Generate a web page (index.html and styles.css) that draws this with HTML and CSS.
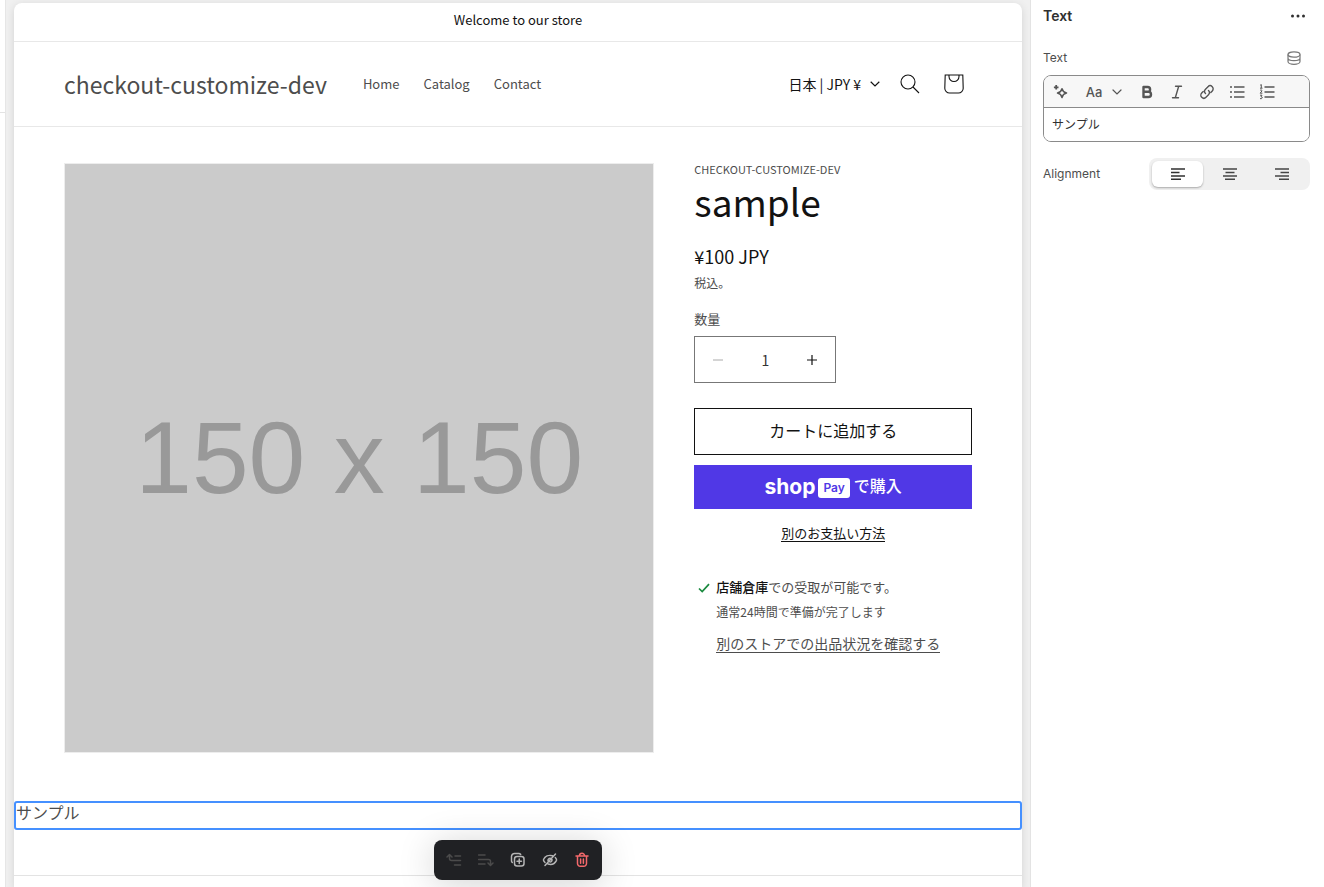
FILE: index.html
```html
<!DOCTYPE html>
<html lang="ja">
<head>
<meta charset="utf-8">
<meta name="viewport" content="width=device-width, initial-scale=1">
<title>checkout-customize-dev</title>
<link rel="stylesheet" href="styles.css">
</head>
<body>
<div class="editor">
  <aside class="sidebar-edge"><div class="sidebar-head"></div></aside>

  <div class="canvas">
    <div class="store">
      <p class="announcement">Welcome to our store</p>

      <header class="header">
        <a class="brand" href="#">checkout-customize-dev</a>
        <nav class="nav">
          <a href="#">Home</a>
          <a href="#">Catalog</a>
          <a href="#">Contact</a>
        </nav>
        <div class="header-tools">
          <button class="locale" type="button">日本 | JPY ¥
            <svg width="10" height="6" viewBox="0 0 10 6" fill="none" stroke="currentColor" stroke-width="1.2"><path d="M.7 .8 5 5 9.3 .8"/></svg>
          </button>
          <button class="tool" type="button" aria-label="Search">
            <svg width="20" height="20" viewBox="0 0 20 20" fill="none" stroke="currentColor" stroke-width="1.1"><circle cx="8" cy="8" r="7"/><path d="M13 13l6 6"/></svg>
          </button>
          <button class="tool" type="button" aria-label="Cart">
            <svg width="20" height="20" viewBox="0 0 20 20" fill="none" stroke="currentColor" stroke-width="1.1"><path d="M1.2 1h17.6l.4 13.2a4.800 4.800 0 0 1-4.800 4.800H5.600a4.800 4.800 0 0 1-4.800-4.800z"/><path d="M5 1v1.500a5 5 0 0 0 10 0V1"/></svg>
          </button>
        </div>
      </header>

      <main>
        <section class="product">
          <div class="media">
            <svg viewBox="0 0 150 150" role="img" aria-label="150 x 150"><rect width="150" height="150" fill="#cbcbcb"/><text class="media-label" x="75" y="84" text-anchor="middle">150 x 150</text></svg>
          </div>
          <div class="info">
            <p class="vendor">CHECKOUT-CUSTOMIZE-DEV</p>
            <h1 class="title">sample</h1>
            <p class="price">¥100 JPY</p>
            <p class="tax">税込。</p>
            <label class="qty-label" for="qty">数量</label>
            <div class="qty">
              <button type="button" aria-label="Decrease" disabled><svg width="10" height="10" viewBox="0 0 10 10" stroke="currentColor"><path d="M0 5h10"/></svg></button>
              <input id="qty" type="text" inputmode="numeric" value="1">
              <button type="button" aria-label="Increase"><svg width="10" height="10" viewBox="0 0 10 10" stroke="currentColor" stroke-width="1.2"><path d="M0 5h10M5 0v10"/></svg></button>
            </div>
            <button class="add" type="button">カートに追加する</button>
            <button class="shop-pay" type="button"><span class="shop">shop</span><span class="pay">Pay</span><span class="buy">で購入</span></button>
            <a class="more-pay" href="#">別のお支払い方法</a>
            <div class="pickup">
              <svg class="tick" width="12" height="10" viewBox="0 0 12 10" fill="none" stroke="#1a8a3f" stroke-width="1.700"><path d="M1 5.500 4.200 8.600 11 1.200"/></svg>
              <div class="pickup-body">
                <p class="pickup-place"><strong>店舗倉庫</strong>での受取が可能です。</p>
                <p class="pickup-time">通常24時間で準備が完了します</p>
                <button class="pickup-link" type="button">別のストアでの出品状況を確認する</button>
              </div>
            </div>
          </div>
        </section>

        <section class="selected">
          <p>サンプル</p>
          <div class="block-bar">
            <button type="button" aria-label="Move up" disabled>
              <svg width="16" height="16" viewBox="0 0 16 16" fill="none" stroke="currentColor" stroke-width="1.500" stroke-linecap="round" stroke-linejoin="round"><path d="M1 5l2.500-2.500L6 5M3.500 3v3.500a2 2 0 0 0 2 2H14.500M9 4h5.500M8.500 13h6"/></svg>
            </button>
            <button type="button" aria-label="Move down" disabled>
              <svg width="16" height="16" viewBox="0 0 16 16" fill="none" stroke="currentColor" stroke-width="1.500" stroke-linecap="round" stroke-linejoin="round"><path d="M.5 3H7M.5 7.500H10.500a2 2 0 0 1 2 2v3.500M10 11l2.500 2.500L15 11M.5 12h6.500"/></svg>
            </button>
            <button type="button" aria-label="Duplicate">
              <svg width="16" height="16" viewBox="0 0 16 16" fill="none" stroke="currentColor" stroke-width="1.500" stroke-linecap="round" stroke-linejoin="round"><rect x="4.500" y="4.500" width="9.500" height="9.500" rx="2.500"/><path d="M9.250 7v4.500M7 9.250h4.500M2.300 10.500A2.500 2.500 0 0 1 1.500 8.500V4.500a3 3 0 0 1 3-3H8.500a2.500 2.500 0 0 1 2.200 1"/></svg>
            </button>
            <button type="button" aria-label="Hide">
              <svg width="16" height="16" viewBox="0 0 16 16" fill="none" stroke="currentColor" stroke-width="1.500" stroke-linecap="round" stroke-linejoin="round"><path d="M13.500 2 3 13.500M10.500 3.800C6.500 2.500 3 4.500 1.500 7.500c-.3 .7 0 1.500 1.500 3M6 12c4 1.200 7-.8 8.500-3.700.3-.8-.1-1.700-1.200-2.800M6 8.700a2.200 2.200 0 0 1 2.300-2.500M10 7.500a2.200 2.200 0 0 1-2 2.500"/></svg>
            </button>
            <button class="danger" type="button" aria-label="Delete">
              <svg width="16" height="16" viewBox="0 0 16 16" fill="none" stroke="currentColor" stroke-width="1.500" stroke-linecap="round" stroke-linejoin="round"><path d="M2 4h12M5.500 3.800a2.500 2.500 0 0 1 5 0M3.500 4.200v7.300a2.800 2.800 0 0 0 2.800 2.800h3.400a2.800 2.800 0 0 0 2.800-2.800V4.200M6.600 7v4.200M9.400 7v4.200"/></svg>
            </button>
          </div>
        </section>
      </main>
      <footer class="footer"></footer>
    </div>
  </div>

  <aside class="panel">
    <header class="panel-head">
      <h2>Text</h2>
      <button type="button" aria-label="More actions"><svg width="16" height="4" viewBox="0 0 16 4" fill="currentColor"><circle cx="2.500" cy="2" r="1.500"/><circle cx="8" cy="2" r="1.500"/><circle cx="13.500" cy="2" r="1.500"/></svg></button>
    </header>
    <div class="field-head">
      <label for="richtext">Text</label>
      <button type="button" aria-label="Connect data source">
        <svg width="14" height="14" viewBox="0 0 14 14" fill="none" stroke="currentColor" stroke-width="1.200"><ellipse cx="7" cy="3.500" rx="6" ry="2.700"/><path d="M1 3.500v7c0 1.500 2.700 2.800 6 2.800s6-1.300 6-2.800v-7M1 7c0 1.500 2.700 2.700 6 2.700S13 8.500 13 7"/></svg>
      </button>
    </div>
    <div class="rich">
      <div class="rich-bar">
        <button class="magic" type="button" aria-label="Generate text">
          <svg width="16" height="16" viewBox="0 0 16 16" fill="none" stroke="currentColor" stroke-width="1.500" stroke-linejoin="round"><path d="M9 4.800c.6 2.500 1.700 3.600 4.500 4.300C10.700 9.800 9.600 10.900 9 13.500 8.400 10.900 7.300 9.800 4.500 9.100 7.300 8.400 8.400 7.300 9 4.800z"/><path d="M3.200 1v4.600M.9 3.300h4.600" stroke-width="1.800"/></svg>
        </button>
        <button class="format" type="button">Aa
          <svg width="10" height="6" viewBox="0 0 10 6" fill="none" stroke="currentColor" stroke-width="1.200" stroke-linecap="round"><path d="M1 1l4 4 4-4"/></svg>
        </button>
        <button type="button" aria-label="Bold">
          <svg width="16" height="16" viewBox="0 0 16 16" fill="none" stroke="currentColor" stroke-width="2.400" stroke-linejoin="round"><path d="M4.500 3h4.200a2.400 2.400 0 0 1 0 4.800H4.500zM4.500 7.800h4.900a2.600 2.600 0 0 1 0 5.200H4.500z"/></svg>
        </button>
        <button type="button" aria-label="Italic">
          <svg width="16" height="16" viewBox="0 0 16 16" fill="none" stroke="currentColor" stroke-width="1.400" stroke-linecap="round"><path d="M6.500 2.200h6M3.500 13.800h6M9.700 2.200 6.300 13.800"/></svg>
        </button>
        <button type="button" aria-label="Link">
          <svg width="16" height="16" viewBox="0 0 16 16" fill="none" stroke="currentColor" stroke-width="1.400" stroke-linecap="round"><path d="M6.500 9.500a3 3 0 0 1 0-4.200L9 2.700a3 3 0 0 1 4.300 4.200L11.800 8.400"/><path d="M9.500 6.500a3 3 0 0 1 0 4.200L7 13.300A3 3 0 0 1 2.700 9.100L4.200 7.600"/></svg>
        </button>
        <button type="button" aria-label="Bulleted list">
          <svg width="16" height="16" viewBox="0 0 16 16" fill="none" stroke="currentColor" stroke-width="1.400"><path d="M5 3h10.500M5 8h10.500M5 13h10.500M1 3h2M1 8h2M1 13h2"/></svg>
        </button>
        <button type="button" aria-label="Numbered list">
          <svg width="16" height="16" viewBox="0 0 16 16" fill="none" stroke="currentColor" stroke-width="1.400"><path d="M5.500 3h10M5.500 8h10M5.500 13h10"/><path stroke-width="1" d="M1.200 1.200 2.300 .6V4M1 4.200h2.500M1 6.500c1-1 2.300-.4 1.900.5L1.200 9.200h2.200M1 11.200h2L2 12.700c2 0 1.700 2.500-1 1.900"/></svg>
        </button>
      </div>
      <textarea id="richtext" rows="1">サンプル</textarea>
    </div>
    <div class="align" role="radiogroup" aria-labelledby="align-name">
      <span class="align-name" id="align-name">Alignment</span>
      <div class="segments">
        <label><input type="radio" name="align" aria-label="Left" checked><svg width="14" height="12" viewBox="0 0 14 12" stroke="currentColor" stroke-width="1.500"><path d="M0 1h14M0 4.500h8.500M0 8h14M0 11.200h10"/></svg></label>
        <label><input type="radio" name="align" aria-label="Center"><svg width="14" height="12" viewBox="0 0 14 12" stroke="currentColor" stroke-width="1.500"><path d="M0 1h14M2.500 4.500h9M0 8h14M2 11.200h10"/></svg></label>
        <label><input type="radio" name="align" aria-label="Right"><svg width="14" height="12" viewBox="0 0 14 12" stroke="currentColor" stroke-width="1.500"><path d="M0 1h14M5.500 4.500H14M0 8h14M4 11.200h10"/></svg></label>
      </div>
    </div>
  </aside>
</div>
</body>
</html>
```
FILE: styles.css
```css
* { box-sizing: border-box; }

body {
  margin: 0;
  background: #f0f0f0;
  color: #4d4d4d;
  font-family: "Noto Sans CJK JP", sans-serif;
}

p, h1, h2 { margin: 0; font-weight: 400; }
a { color: inherit; text-decoration: none; }
svg { display: block; flex: none; }

button {
  display: flex;
  align-items: center;
  justify-content: center;
  margin: 0;
  padding: 0;
  border: 0;
  background: none;
  color: inherit;
  font: inherit;
}

.editor { display: flex; height: 100vh; overflow: hidden; }

.sidebar-edge { flex: none; width: 6px; background: #fff; border-right: 1px solid #e6e6e6; }
.sidebar-head { height: 113px; border-bottom: 1px solid #e3e3e3; }

/* Storefront preview */
.canvas { flex: 1; min-width: 0; padding: 3px 8px 0; }

.store {
  min-height: 100%;
  background: #fff;
  border-radius: 8px 8px 0 0;
  box-shadow: 0 2px 8px rgba(0, 0, 0, 0.12);
}

.announcement {
  padding: 6px 0 10px;
  border-bottom: 1px solid #e8e8e8;
  color: #121212;
  font-size: 13px;
  line-height: 22px;
  text-align: center;
}

.header {
  display: flex;
  align-items: center;
  padding: 20px 50px;
  border-bottom: 1px solid #e8e8e8;
  line-height: 44px;
}

.brand { font-size: 23px; }
.nav { display: flex; gap: 24px; margin-left: 36px; font-size: 13px; }
.header-tools { display: flex; align-items: center; margin-left: auto; color: #121212; }
.locale { gap: 9px; margin-right: 8px; font-size: 14px; }
.tool { width: 44px; height: 44px; }
.tool:last-child { margin-right: -4px; }

.product { display: flex; gap: 40px; padding: 36px 50px 48px; }
.media { flex: 589; min-width: 0; border: 1px solid #ededed; }
.media svg { width: 100%; height: auto; }
.media-label { fill: #999; font-family: "Liberation Sans", Arial, sans-serif; font-size: 26px; }
.info { flex: 278; min-width: 0; }

.vendor { font-size: 11px; line-height: 12px; }
.title { color: #121212; font-size: 37px; line-height: 52px; }
.price { margin-top: 16px; color: #121212; font-size: 18px; line-height: 26px; }
.tax { margin-top: 4px; font-size: 12px; line-height: 20px; }
.qty-label { display: block; margin-top: 17px; font-size: 13px; line-height: 18px; }

.qty {
  display: flex;
  width: 142px;
  height: 47px;
  margin-top: 8px;
  border: 1px solid #777;
  color: #121212;
}
.qty button { flex: none; width: 46px; }
.qty button:disabled { color: #aaa; }
.qty input {
  flex: 1;
  min-width: 0;
  padding: 0;
  border: 0;
  background: none;
  color: #333;
  font: 14px "Noto Sans CJK JP", sans-serif;
  text-align: center;
}

.add {
  width: 100%;
  height: 47px;
  margin-top: 25px;
  padding-bottom: 4px;
  border: 1px solid #121212;
  color: #121212;
  font-size: 16px;
}

.shop-pay {
  width: 100%;
  height: 44px;
  margin-top: 10px;
  background: #5038e6;
  color: #fff;
}
.shop { font: 700 21px/24px Inter, sans-serif; }
.pay {
  margin: 2px 4px 0 3px;
  padding: 0 5px;
  border-radius: 3px;
  background: #fff;
  color: #5038e6;
  font: 600 12px/20px Inter, sans-serif;
}
.buy { padding-bottom: 4px; font-size: 16px; font-weight: 500; }

.more-pay {
  display: block;
  width: fit-content;
  margin: 15px auto 0;
  border-bottom: 1px solid #121212;
  color: #121212;
  font-size: 13px;
  line-height: 17px;
}

.pickup { display: flex; gap: 6px; margin-top: 35px; padding-left: 4px; }
.tick { margin-top: 6px; }
.pickup-place { font-size: 13px; line-height: 20px; }
.pickup-place strong { color: #121212; font-weight: 500; }
.pickup-time { margin-top: 5px; font-size: 12px; line-height: 20px; }
.pickup-link { margin-top: 12px; border-bottom: 1px solid #4d4d4d; font-size: 14px; line-height: 18px; white-space: nowrap; }

/* Block that is selected in the editor, with its action bar */
.selected {
  position: relative;
  padding-bottom: 6px;
  border: 2px solid #4590ff;
  border-radius: 3px;
  font-size: 16px;
  line-height: 19px;
}

.block-bar {
  position: absolute;
  z-index: 1;
  top: calc(100% + 12px);
  left: 50%;
  display: flex;
  padding: 4px;
  border-radius: 8px;
  background: #202124;
  color: #b5b5b5;
  box-shadow: 0 4px 36px rgba(0, 0, 0, 0.18);
  transform: translateX(-50%);
}
.block-bar button { width: 32px; height: 32px; }
.block-bar button:disabled { color: #4b4b4b; }
.block-bar .danger { color: #f4696b; }

.footer { margin-top: 45px; border-top: 1px solid #e3e3e3; }

/* Settings panel */
.panel {
  flex: none;
  width: 294px;
  padding: 4px 14px 0 12px;
  border-left: 1px solid #e3e3e3;
  background: #fff;
  font: 13px/20px Inter, sans-serif;
}

.panel-head, .field-head { display: flex; align-items: center; justify-content: space-between; }
.panel-head { height: 24px; padding-right: 4px; color: #303030; }
.panel-head h2 { font-size: 14px; font-weight: 600; }
.field-head { margin-top: 20px; padding-right: 9px; }
.field-head button { color: #777; }

.rich { margin-top: 7px; overflow: hidden; border: 1px solid #8a8a8a; border-radius: 8px; }
.rich-bar {
  display: flex;
  height: 32px;
  padding-left: 2px;
  border-bottom: 1px solid #8a8a8a;
  background: #f7f7f7;
  color: #555;
}
.rich-bar button { width: 30px; }
.rich-bar .format { gap: 10px; width: 56px; font: 500 13px/20px Inter, sans-serif; }

.rich textarea {
  display: block;
  width: 100%;
  height: 33px;
  padding: 6px 8px;
  border: 0;
  background: #fff;
  color: #303030;
  font: 12px/20px "Noto Sans CJK JP", sans-serif;
  resize: none;
}

.align { display: flex; align-items: center; justify-content: space-between; margin-top: 16px; }
.align-name, .field-head label { font-size: 12px; }
.segments { display: flex; gap: 1px; padding: 3px; border-radius: 8px; background: #f0f0f0; color: #444; }
.segments label {
  display: flex;
  align-items: center;
  justify-content: center;
  width: 51px;
  height: 26px;
  border-radius: 6px;
}
.segments label:has(:checked) { background: #fff; color: #303030; box-shadow: 0 1px 2px rgba(0, 0, 0, 0.3); }
.segments input { position: absolute; width: 1px; height: 1px; margin: 0; appearance: none; opacity: 0; }
```
